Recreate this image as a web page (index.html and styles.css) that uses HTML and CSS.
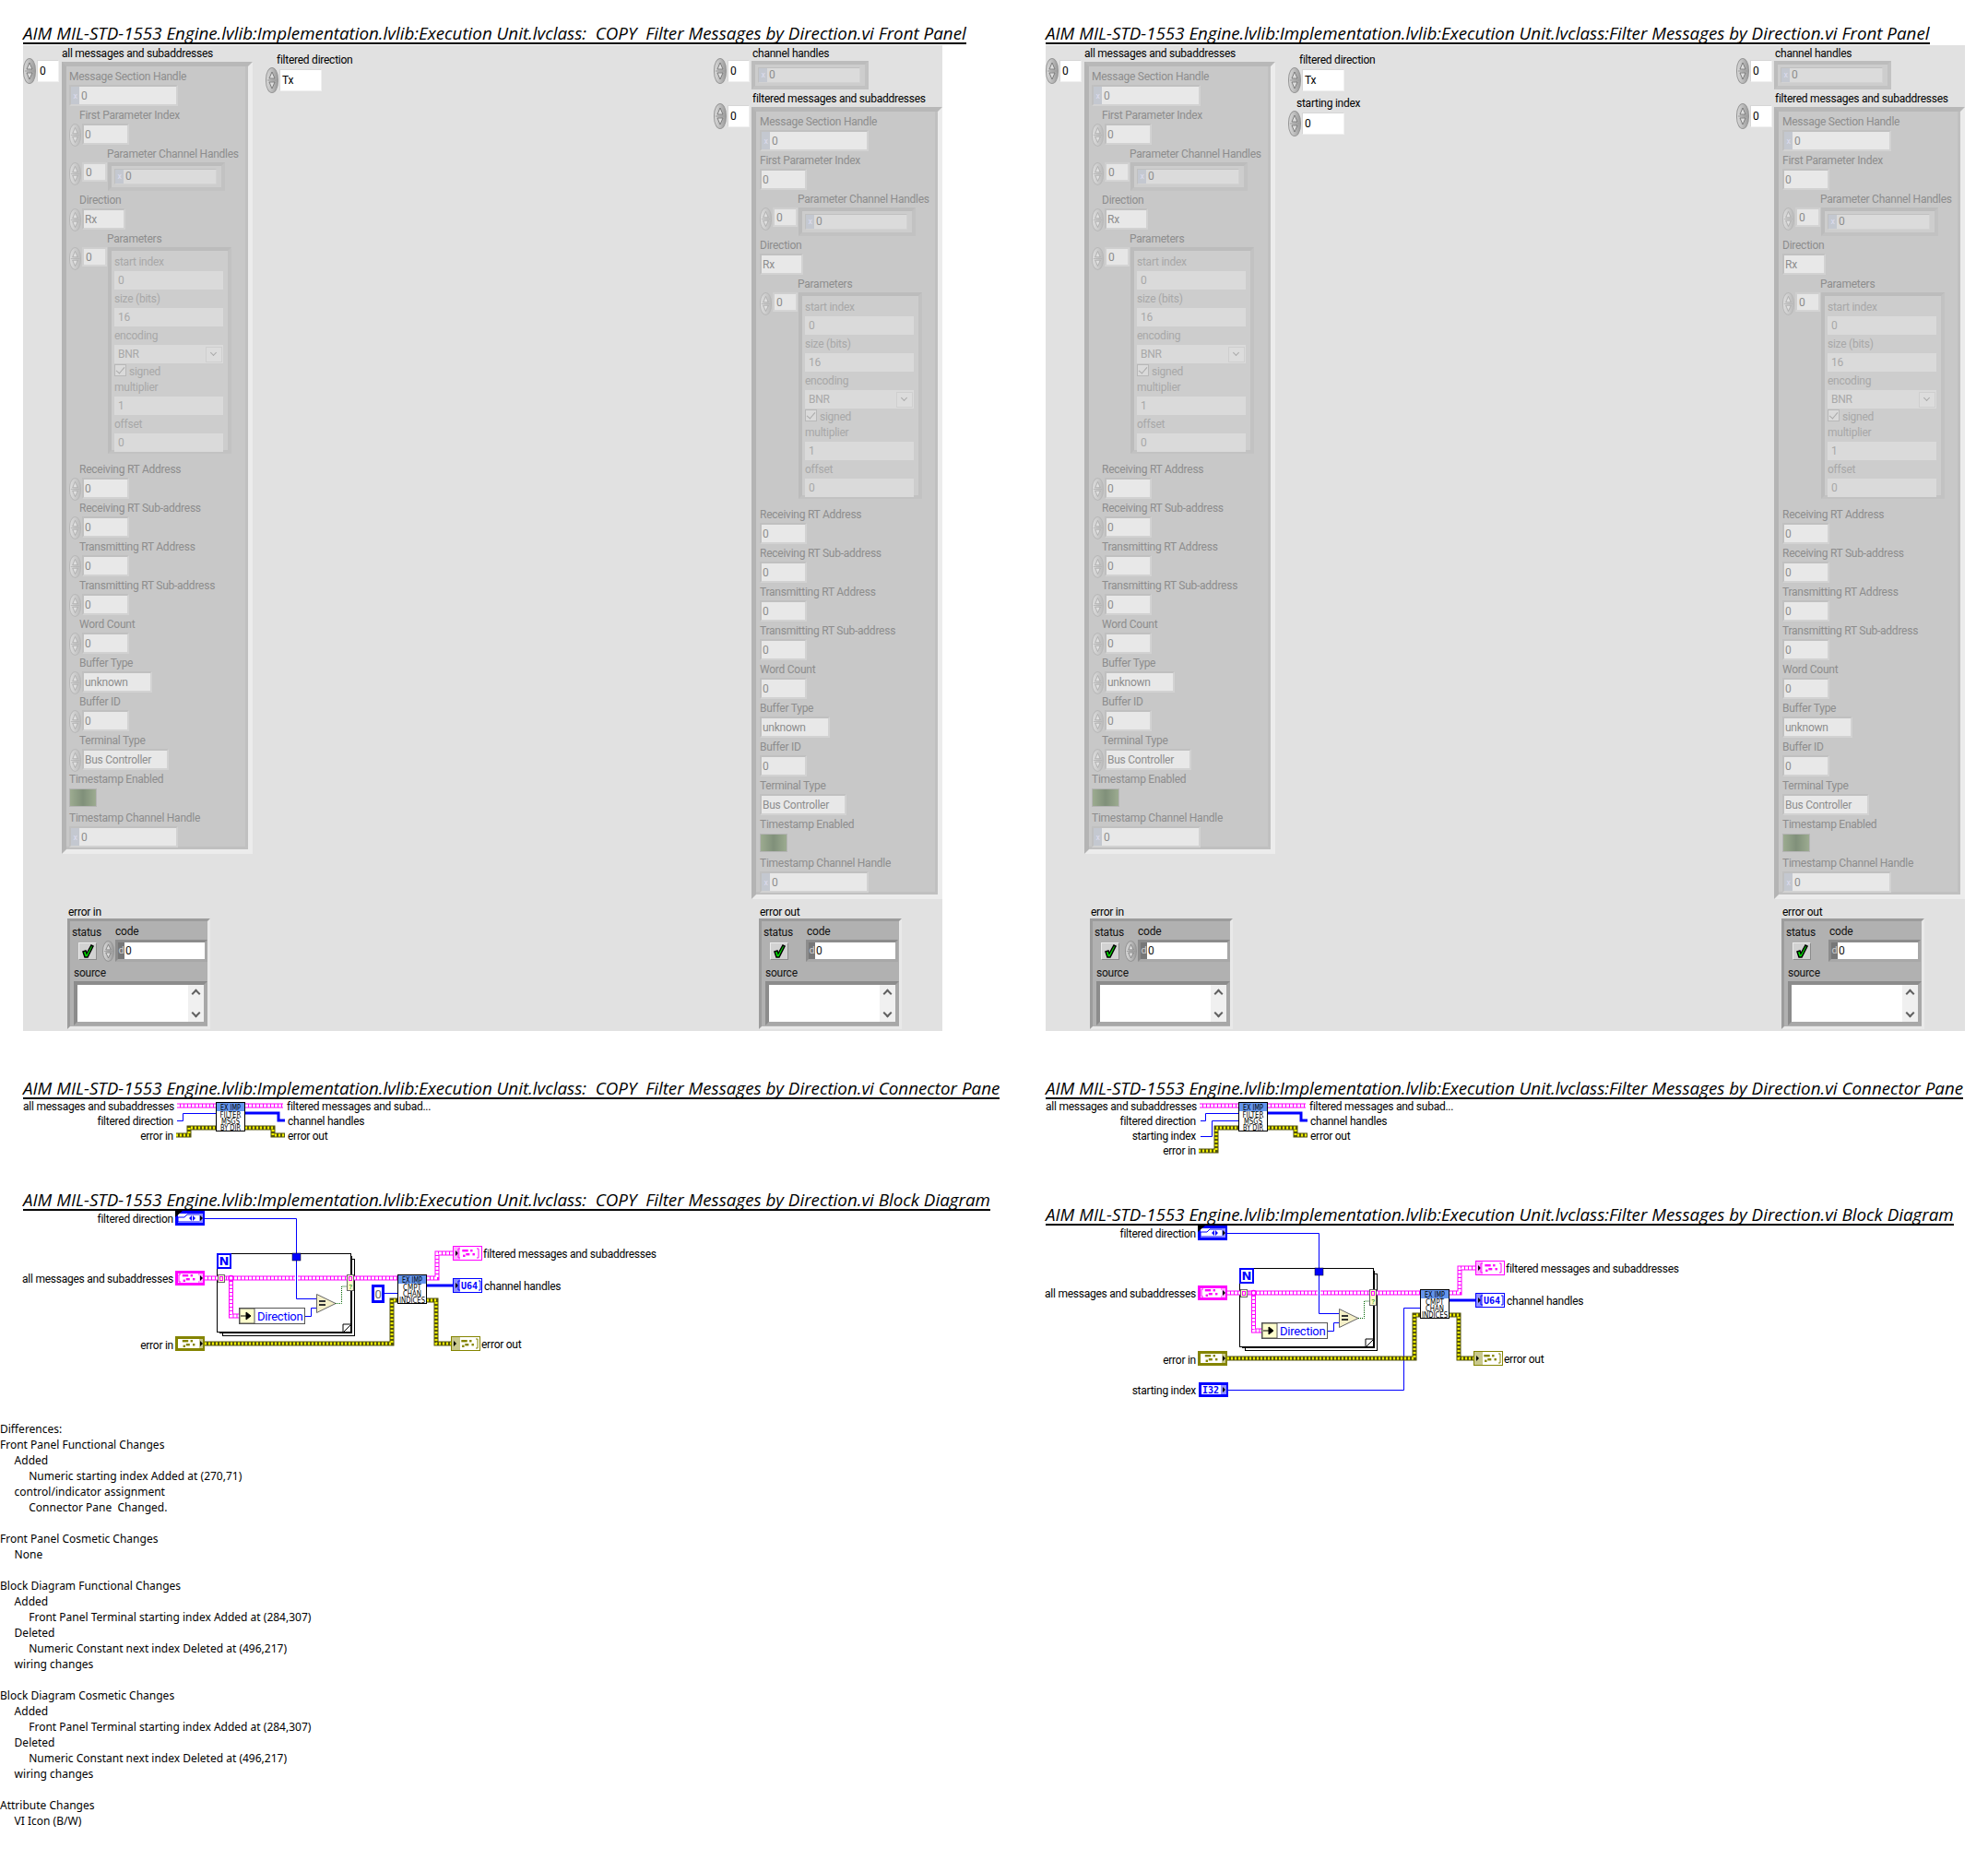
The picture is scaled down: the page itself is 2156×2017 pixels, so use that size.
FILE: index.html
```html
<!DOCTYPE html>
<html>

<head>
   <title>VI Comparison Report</title>
   <link rel="stylesheet" href="styles.css">
</head>

<body>

<svg class="defs">
   <defs>
      <symbol id="vi-filter" viewBox="0 0 32 32">
         <rect x=".5" y=".5" width="31" height="31" fill="#fff" stroke="#000" />
         <rect x="1" y="1" width="30" height="9" fill="#6495ed" />
         <text class="vi-head" x="16" y="8.5" textLength="22" lengthAdjust="spacingAndGlyphs">EX IMP</text>
         <text class="vi-line" x="16" y="17" textLength="23" lengthAdjust="spacingAndGlyphs">FILTER</text>
         <text class="vi-line" x="16" y="24" textLength="20" lengthAdjust="spacingAndGlyphs">MSGS</text>
         <text class="vi-line" x="16" y="31" textLength="22" lengthAdjust="spacingAndGlyphs">BY DIR</text>
      </symbol>
      <symbol id="vi-chan" viewBox="0 0 32 32">
         <rect x=".5" y=".5" width="31" height="31" fill="#fff" stroke="#000" />
         <rect x="1" y="1" width="30" height="9" fill="#6495ed" />
         <text class="vi-head" x="16" y="8.5" textLength="22" lengthAdjust="spacingAndGlyphs">EX IMP</text>
         <text class="vi-line" x="16" y="17" textLength="20" lengthAdjust="spacingAndGlyphs">CMPT</text>
         <text class="vi-line" x="16" y="24" textLength="20" lengthAdjust="spacingAndGlyphs">CHAN</text>
         <text class="vi-line" x="16" y="31" textLength="28" lengthAdjust="spacingAndGlyphs">INDICES</text>
      </symbol>
      <symbol id="pat-cluster" viewBox="0 0 18 10">
         <rect x="0" y="0" width="8" height="3" />
         <rect x="11" y="0" width="3" height="3" />
         <rect x="1" y="7" width="3" height="3" />
         <rect x="5" y="5" width="5" height="3" />
         <rect x="14" y="5" width="3" height="3" />
      </symbol>
      <symbol id="ctl-array" viewBox="0 0 32 16">
         <rect x="1.5" y="1.5" width="29" height="13" fill="#fff" stroke="#ff00ff" stroke-width="3" />
         <path d="M6 4H4V12H6M25 4H27V12H25" fill="none" stroke="#ff00ff" />
         <use href="#pat-cluster" x="7" y="4" width="16" height="8" fill="#ff00ff" />
         <rect x="26" y="3" width="4" height="10" fill="#ffb0ff" />
         <path d="M27 5L30 8L27 11Z" />
      </symbol>
      <symbol id="ctl-error" viewBox="0 0 32 16">
         <rect x="1.5" y="1.5" width="29" height="13" fill="#fff" stroke="#848400" stroke-width="3" />
         <use href="#pat-cluster" x="7" y="4" width="16" height="8" fill="#848400" />
         <rect x="26" y="3" width="4" height="10" fill="#c8c88c" />
         <path d="M27 5L30 8L27 11Z" />
      </symbol>
      <symbol id="ctl-enum" viewBox="0 0 32 16">
         <rect x="1.5" y="1.5" width="29" height="13" fill="#fff" stroke="#0000ff" stroke-width="3" />
         <path d="M3 7H10L13 4H27V12H3Z" fill="none" stroke="#0000ff" />
         <path d="M15 8L18 5V11ZM19 5L22 8L19 11Z" fill="#0000ff" />
         <rect x="26" y="3" width="4" height="10" fill="#9090ff" />
         <path d="M27 5L30 8L27 11Z" />
         <path d="M0 0H8L0 7Z" />
      </symbol>
      <symbol id="ctl-i32" viewBox="0 0 32 16">
         <rect x="1.5" y="1.5" width="29" height="13" fill="#fff" stroke="#0000ff" stroke-width="3" />
         <text class="term-num" x="13" y="12">I32</text>
         <rect x="24" y="3" width="6" height="10" fill="#9090ff" />
         <path d="M26 5L29 8L26 11Z" />
      </symbol>
      <symbol id="ind-array" viewBox="0 0 32 16">
         <rect x=".5" y=".5" width="31" height="15" fill="#fff" stroke="#ff00ff" />
         <rect x="1" y="1" width="7" height="14" fill="#ffb0ff" />
         <path d="M3 5L6 8L3 11Z" />
         <use href="#pat-cluster" x="10" y="4" width="15" height="8" fill="#ff00ff" />
         <path d="M8 3H6V13H8M26 3H28V13H26" fill="none" stroke="#ff00ff" />
      </symbol>
      <symbol id="ind-u64" viewBox="0 0 32 16">
         <rect x=".5" y=".5" width="31" height="15" fill="#fff" stroke="#0000ff" />
         <rect x="1" y="1" width="7" height="14" fill="#9090ff" />
         <path d="M3 5L6 8L3 11Z" />
         <path d="M8 3H6V13H8M28 3H30V13H28" fill="none" stroke="#0000ff" />
         <text class="term-num" x="18" y="12">U64</text>
      </symbol>
      <symbol id="ind-error" viewBox="0 0 32 16">
         <rect x=".5" y=".5" width="31" height="15" fill="#fff" stroke="#848400" />
         <rect x="1" y="1" width="9" height="14" fill="#c8c88c" />
         <path d="M3 5L6 8L3 11Z" />
         <use href="#pat-cluster" x="10" y="4" width="17" height="8" fill="#848400" />
         <path d="M27 3H29V13H27" fill="none" stroke="#848400" />
      </symbol>
      <g id="loop">
         <rect x="241.5" y="1365.5" width="143" height="83" fill="#fff" stroke="#000" />
         <rect x="238.5" y="1362.5" width="143" height="83" fill="#fff" stroke="#000" />
         <rect x="235.5" y="1359.5" width="145" height="85" fill="#fff" stroke="#000" />
         <path d="M372 1445L381 1436M372 1436H381M372 1436V1445" fill="none" stroke="#000" />
         <rect x="236" y="1360" width="14" height="15" fill="#fff" stroke="#0000ff" stroke-width="2" />
         <text class="loop-n" x="243" y="1372">N</text>
         <path class="thin" d="M222 1321.5H321.5V1408.5H343" />
         <rect x="317" y="1359" width="9" height="8" fill="#0000ff" stroke="#000" stroke-width=".5" />
         <path class="pink-a" d="M222 1386H320M323 1386H431" />
         <path class="pink-b" d="M222 1386H320M323 1386H431" />
         <path class="pink-a" d="M250.5 1386V1427H259" />
         <path class="pink-b" d="M250.5 1386V1427H259" />
         <circle cx="250.5" cy="1386" r="2.5" fill="#fff" stroke="#ff00ff" stroke-width="1.5" />
         <rect x="236.5" y="1382.5" width="7" height="8" fill="#ffffcc" stroke="#666" />
         <rect x="238.5" y="1384.5" width="3" height="4" fill="none" stroke="#ff00ff" />
         <rect x="376.5" y="1382.5" width="7" height="17" fill="#ffffcc" stroke="#666" />
         <rect x="378.5" y="1384.5" width="3" height="4" fill="none" stroke="#ff00ff" />
         <text class="cond" x="380" y="1398">?</text>
         <rect x="259.5" y="1418.5" width="71" height="17" fill="#fff" stroke="#555" />
         <rect x="260" y="1419" width="16" height="16" fill="#ffffcc" stroke="#555" />
         <path d="M261 1427H268M267 1423L272 1427L267 1431Z" stroke="#000" />
         <text class="unb" x="279" y="1432">Direction</text>
         <path class="thin" d="M331 1427.5H337.5V1418.5H343" />
         <path d="M343.5 1403.5L364 1413.5L343.5 1423.5Z" fill="#f5f0c8" stroke="#666" />
         <path d="M346 1411H353M346 1415H353" stroke="#333" stroke-width="2" />
         <path class="bool" d="M364 1413.5H370.5V1395H376" />
      </g>
      <g id="outs">
         <path class="pink-a" d="M463 1386H474V1359H491" />
         <path class="pink-b" d="M463 1386H474V1359H491" />
         <path class="thick" d="M463 1394H491" />
         <path class="err-a" d="M463 1410H473V1457H490" />
         <path class="err-b" d="M463 1410H473V1457H490" />
         <use href="#ind-array" x="491" y="1351" width="32" height="16" />
         <use href="#ind-u64" x="491" y="1386" width="32" height="16" />
         <use href="#ind-error" x="489" y="1449" width="32" height="16" />
         <use href="#vi-chan" x="431" y="1382" width="32" height="32" />
         <text class="tl" x="524" y="1364">filtered messages and subaddresses</text>
         <text class="tl" x="525" y="1399">channel handles</text>
         <text class="tl" x="522" y="1462">error out</text>
      </g>
      <g id="ins">
         <use href="#ctl-enum" x="190" y="1313" width="32" height="16" />
         <use href="#ctl-array" x="190" y="1378" width="32" height="16" />
         <use href="#ctl-error" x="190" y="1449" width="32" height="16" />
         <text class="tr" x="188" y="1326">filtered direction</text>
         <text class="tr" x="188" y="1391">all messages and subaddresses</text>
         <text class="tr" x="188" y="1463">error in</text>
      </g>
      <g id="pane-common">
         <path class="pink-a" d="M192 1199H234" />
         <path class="pink-b" d="M192 1199H234" />
         <path class="pink-a" d="M266 1199H307" />
         <path class="pink-b" d="M266 1199H307" />
         <path class="thick" d="M266 1207H302V1215H309" />
         <path class="err-a" d="M266 1223H296V1231H309" />
         <path class="err-b" d="M266 1223H296V1231H309" />
         <use href="#vi-filter" x="234" y="1195" width="32" height="32" />
         <text class="tr" x="189" y="1204">all messages and subaddresses</text>
         <text class="tr" x="188" y="1220">filtered direction</text>
         <text class="tl" x="311" y="1204">filtered messages and subad...</text>
         <text class="tl" x="312" y="1220">channel handles</text>
         <text class="tl" x="312" y="1236">error out</text>
      </g>
   </defs>
</svg>

<main class="sheet">

   <section class="col">
      <h2 class="vi-title">AIM MIL-STD-1553 Engine.lvlib:Implementation.lvlib:Execution Unit.lvclass:  COPY  Filter Messages by Direction.vi Front Panel</h2>
      <div class="panel" data-variant="copy"></div>

      <h2 class="vi-title gap-a">AIM MIL-STD-1553 Engine.lvlib:Implementation.lvlib:Execution Unit.lvclass:  COPY  Filter Messages by Direction.vi Connector Pane</h2>
      <svg class="pane" viewBox="0 1192 1109 93">
         <use href="#pane-common" />
         <path class="thin" d="M192 1215.5H198.5V1207.5H234" />
         <path class="err-a" d="M191 1231H205V1223H234" />
         <path class="err-b" d="M191 1231H205V1223H234" />
         <text class="tr" x="188" y="1236">error in</text>
      </svg>

      <h2 class="vi-title">AIM MIL-STD-1553 Engine.lvlib:Implementation.lvlib:Execution Unit.lvclass:  COPY  Filter Messages by Direction.vi Block Diagram</h2>
      <svg class="diagram" viewBox="0 1313 1109 228">
         <use href="#loop" />
         <path class="err-a" d="M222 1457H425V1410H431" />
         <path class="err-b" d="M222 1457H425V1410H431" />
         <path class="thin" d="M416 1402.5H431" />
         <rect x="404.5" y="1394.5" width="11" height="17" fill="#fff" stroke="#0000ff" stroke-width="3" />
         <text class="const" x="410" y="1408">0</text>
         <use href="#ins" />
         <use href="#outs" />
      </svg>

      <pre class="diff">Differences:
Front Panel Functional Changes
     Added
          Numeric starting index Added at (270,71)
     control/indicator assignment
          Connector Pane  Changed.

Front Panel Cosmetic Changes
     None

Block Diagram Functional Changes
     Added
          Front Panel Terminal starting index Added at (284,307)
     Deleted
          Numeric Constant next index Deleted at (496,217)
     wiring changes

Block Diagram Cosmetic Changes
     Added
          Front Panel Terminal starting index Added at (284,307)
     Deleted
          Numeric Constant next index Deleted at (496,217)
     wiring changes

Attribute Changes
     VI Icon (B/W)</pre>
   </section>

   <section class="col">
      <h2 class="vi-title">AIM MIL-STD-1553 Engine.lvlib:Implementation.lvlib:Execution Unit.lvclass:Filter Messages by Direction.vi Front Panel</h2>
      <div class="panel" data-variant="orig"></div>

      <h2 class="vi-title gap-a">AIM MIL-STD-1553 Engine.lvlib:Implementation.lvlib:Execution Unit.lvclass:Filter Messages by Direction.vi Connector Pane</h2>
      <svg class="pane pane-tall" viewBox="0 1192 1109 109">
         <use href="#pane-common" />
         <path class="thin" d="M193 1215.5H198.5V1207.5H234" />
         <path class="thin" d="M193 1232.5H205.5V1215.5H234" />
         <path class="err-a" d="M191 1248H210V1223H234" />
         <path class="err-b" d="M191 1248H210V1223H234" />
         <text class="tr" x="188" y="1236">starting index</text>
         <text class="tr" x="188" y="1252">error in</text>
      </svg>

      <h2 class="vi-title">AIM MIL-STD-1553 Engine.lvlib:Implementation.lvlib:Execution Unit.lvclass:Filter Messages by Direction.vi Block Diagram</h2>
      <svg class="diagram" viewBox="0 1313 1109 228">
         <use href="#loop" />
         <path class="thin" d="M222 1491.5H413.5V1402.5H431" />
         <path class="err-a" d="M222 1457H425V1410H431" />
         <path class="err-b" d="M222 1457H425V1410H431" />
         <use href="#ins" />
         <use href="#outs" />
         <use href="#ctl-i32" x="191" y="1483" width="32" height="16" />
         <text class="tr" x="188" y="1496">starting index</text>
      </svg>
   </section>

</main>

<script src="panel.js"></script>

</body>

</html>
```

FILE: styles.css
```css
html,
body {
   margin: 0;
   background: #fff;
}

body {
   font-family: Roboto, sans-serif;
   font-size: 12px;
   letter-spacing: -.25px;
   color: #000;
}

.defs {
   position: absolute;
   width: 0;
   height: 0;
}

.sheet {
   display: grid;
   grid-template-columns: 1109px 1fr;
   height: 2017px;
   overflow: hidden;
}

.col {
   min-width: 0;
}

.vi-title {
   display: block;
   width: fit-content;
   margin: 0 0 0 25px;
   padding-top: 20px;
   height: 26px;
   border-bottom: 2px solid #000;
   font: italic 400 18.8px/33px "Open Sans", sans-serif;
   letter-spacing: 0;
   white-space: pre;
   color: #000;
}

.vi-title.gap-a {
   margin-top: 46px;
   padding-top: 0;
}

.vi-title:not(:first-child):not(.gap-a) {
   padding-top: 0;
}

.col svg.pane {
   display: block;
   width: 1109px;
   height: 93px;
}

.col svg.pane-tall {
   height: 109px;
}

.col svg.diagram {
   display: block;
   width: 1109px;
   height: 228px;
}

.diff {
   margin: 0;
   font: 12px/17px "Noto Sans", sans-serif;
   letter-spacing: 0;
}

/* front panel */

.panel {
   position: relative;
   width: 997px;
   height: 1069px;
   margin: 1px 0 0 25px;
   background: #e1e1e1;
}

.panel > * {
   position: absolute;
}

.lbl {
   height: 18px;
   line-height: 18px;
   white-space: nowrap;
}

.spin {
   flex: none;
   box-sizing: border-box;
   width: 13px;
   height: 25px;
   margin-right: 1px;
   border: 1px solid #969696;
   border-radius: 7px / 12px;
   background:
      url("data:image/svg+xml,%3Csvg xmlns='http://www.w3.org/2000/svg' viewBox='0 0 14 26' preserveAspectRatio='none'%3E%3Cpath d='M7 4L3.5 11H10.5Z' fill='%23ddd' stroke='%23666' stroke-width='.8'/%3E%3Cpath d='M7 22L3.5 15H10.5Z' fill='%23ddd' stroke='%23666' stroke-width='.8'/%3E%3Cpath d='M1 13H13' stroke='%23999'/%3E%3C/svg%3E") center / 100% 100% no-repeat,
      linear-gradient(90deg, #d8d8d8, #bcbcbc 50%, #9c9c9c);
}

.dim .spin {
   border-color: #b8b8b8;
   background:
      url("data:image/svg+xml,%3Csvg xmlns='http://www.w3.org/2000/svg' viewBox='0 0 14 26' preserveAspectRatio='none'%3E%3Cpath d='M7 4L3.5 11H10.5Z' fill='%23e0e0e0' stroke='%23a0a0a0' stroke-width='.8'/%3E%3Cpath d='M7 22L3.5 15H10.5Z' fill='%23e0e0e0' stroke='%23a0a0a0' stroke-width='.8'/%3E%3Cpath d='M1 13H13' stroke='%23b4b4b4'/%3E%3C/svg%3E") center / 100% 100% no-repeat,
      linear-gradient(90deg, #dcdcdc, #cccccc 50%, #bcbcbc);
}

.idx-col {
   display: flex;
   align-items: center;
}

.idx-col .spin {
   width: 14px;
   height: 28px;
   border-radius: 7px / 13px;
}

.idx {
   box-sizing: border-box;
   flex: none;
   width: 27px;
   height: 21px;
   padding-left: 2px;
   line-height: 18px;
   background: #fff;
   border: 2px solid;
   border-color: #e8e8e8 #ececec #ececec #e8e8e8;
}

.dim .idx {
   background: #e6e6e6;
   color: #8a8a8a;
   border-color: #cfcfcf #d4d4d4 #d4d4d4 #cfcfcf;
}

.str {
   box-sizing: border-box;
   display: flex;
   height: 24px;
   padding: 1px 0 0 2px;
   line-height: 21px;
   background: #fff;
   border: 1px solid;
   border-color: #d6d6d6 #f0f0f0 #f0f0f0 #d6d6d6;
}

/* disabled cluster */

.cluster {
   box-sizing: border-box;
   width: 207px;
   height: 859px;
   padding: 2px 3px 0 3px;
   background: #c8c8c8;
   color: #8d8d8d;
   border: 5px solid;
   border-color: #b8b8b8 #ececec #ececec #b4b4b4;
   box-shadow: inset -3px -3px 0 #c0c0c0;
}

.cluster-r {
   padding-left: 4px;
}

.row {
   height: 42px;
}

.row.tall-a {
   height: 50px;
}

.row.tall-b {
   height: 250px;
}

.row.indent > .lbl {
   margin-left: 11px;
}

.row.indent-a > .lbl {
   margin-left: 41px;
}

.ctl {
   display: flex;
   align-items: flex-start;
}

.fld {
   box-sizing: border-box;
   display: flex;
   flex: none;
   height: 23px;
   padding-left: 1px;
   line-height: 21px;
   background: #e8e8e8;
   border: 2px solid;
   border-color: #c0c0c0 #d2d2d2 #d2d2d2 #c0c0c0;
   color: #8d8d8d;
}

.radix {
   width: 9px;
   margin: 0 2px 0 -1px;
   font-size: 9px;
   text-align: center;
   background: #c4c8d0;
   color: #dde;
}

.w-ref {
   width: 118px;
}

.w-num {
   width: 51px;
}

.w-enum {
   width: 47px;
}

.w-buf {
   width: 76px;
}

.w-term {
   width: 94px;
}

.arr-frame {
   box-sizing: border-box;
   flex: none;
   margin-left: 1px;
   padding: 3px 5px 3px 3px;
   background: #cdcdcd;
   border: 4px solid;
   border-color: #bcbcbc #c2c2c2 #c2c2c2 #bcbcbc;
}

.arr-chan {
   width: 127px;
   height: 31px;
}

.arr-chan .fld {
   width: 111px;
   height: 17px;
   line-height: 14px;
   border-width: 1px;
   background: #dbdbdb;
}

.arr-param {
   width: 134px;
   height: 224px;
   color: #a8a8a8;
}

.p-row {
   height: 40px;
}

.p-row .lbl {
   height: 19px;
   line-height: 18px;
}

.p-fld {
   box-sizing: border-box;
   height: 20px;
   padding-left: 4px;
   line-height: 20px;
   background: #dadada;
   color: #a8a8a8;
}

.p-ring {
   display: flex;
   justify-content: space-between;
}

.p-arrow {
   width: 16px;
   height: 15px;
   margin: 2px 1px;
   border: 1px solid #cfcfcf;
   background: #dcdcdc;
   position: relative;
}

.p-arrow::after {
   content: "";
   position: absolute;
   left: 5px;
   top: 3px;
   width: 4px;
   height: 4px;
   border-right: 1px solid #aaa;
   border-bottom: 1px solid #aaa;
   transform: rotate(45deg);
}

.p-check {
   display: flex;
   height: 16px;
   line-height: 16px;
   gap: 3px;
}

.p-box {
   box-sizing: border-box;
   width: 13px;
   height: 13px;
   border: 1px solid #b8b8b8;
   background: #dadada;
   position: relative;
}

.p-box::after {
   content: "";
   position: absolute;
   left: 3px;
   top: 0;
   width: 4px;
   height: 8px;
   border-right: 1px solid #aaa;
   border-bottom: 1px solid #aaa;
   transform: rotate(40deg);
}

.led {
   width: 30px;
   height: 20px;
   margin-top: 1px;
   background: linear-gradient(90deg, #9cab90, #80907a 50%, #9cab90);
   border: 1px solid #b4b4b4;
   box-sizing: border-box;
}

/* error cluster */

.err {
   box-sizing: border-box;
   width: 155px;
   height: 120px;
   background: #b1b1b1;
   border: 3px solid;
   border-color: #9c9c9c #e9e9e9 #e9e9e9 #9c9c9c;
   color: #111;
}

.err-top {
   display: flex;
   padding: 3px 0 0 2px;
}

.err-status {
   width: 47px;
   margin-top: 1px;
}

.err-status .lbl {
   height: 16px;
   line-height: 16px;
}

.err-led {
   box-sizing: border-box;
   width: 20px;
   height: 19px;
   margin: 3px 0 0 7px;
   background: #d2d2d2;
   border: 1px solid;
   border-color: #ececec #8c8c8c #8c8c8c #ececec;
}

.err-led svg {
   display: block;
   width: 18px;
   height: 17px;
}

.err-code .lbl {
   height: 17px;
   line-height: 17px;
}

.err-code-row {
   display: flex;
   align-items: center;
   margin-left: -14px;
}

.err-code-row .spin {
   height: 23px;
}

.err-code-row.no-spin {
   margin-left: -1px;
}

.err-code-row .code {
   box-sizing: border-box;
   display: flex;
   width: 100px;
   height: 24px;
   border: 3px solid;
   border-color: #8c8c8c #a8a8a8 #a8a8a8 #8c8c8c;
   background: #fff;
   line-height: 18px;
}

.code .radix {
   background: #777;
   color: #ccc;
   width: 7px;
   margin: 0 1px 0 0;
   font-size: 11px;
   line-height: 17px;
}

.err-src {
   margin: 3px 0 0 4px;
}

.err-src .lbl {
   margin-bottom: 0;
}

.err-text {
   box-sizing: border-box;
   display: flex;
   justify-content: flex-end;
   width: 145px;
   height: 48px;
   margin-left: 0;
   background: #fff;
   border: 4px solid;
   border-color: #8c8c8c #a8a8a8 #a8a8a8 #8c8c8c;
}

.scroll {
   display: flex;
   flex-direction: column;
   justify-content: space-between;
   align-items: center;
   width: 17px;
   background: #f0f0f0;
   padding: 3px 0;
   box-sizing: border-box;
}

.chev {
   width: 5px;
   height: 5px;
   border-left: 2px solid #606060;
   border-top: 2px solid #606060;
   transform: rotate(45deg);
   margin-top: 3px;
}

.chev.down {
   transform: rotate(225deg);
   margin-top: 0;
   margin-bottom: 3px;
}

/* diagram text and wires */

svg text {
   font-family: Roboto, sans-serif;
   font-size: 12px;
   letter-spacing: -.25px;
   fill: #000;
}

.tr {
   text-anchor: end;
}

.tl {
   text-anchor: start;
}

svg .vi-head,
svg .vi-line {
   font-family: "DejaVu Sans", sans-serif;
   font-size: 8.5px;
   letter-spacing: 0;
   text-anchor: middle;
}

svg .term-num {
   font-family: "DejaVu Sans Mono", monospace;
   font-size: 10px;
   font-weight: 700;
   letter-spacing: 0;
   text-anchor: middle;
   fill: #0000ff;
}

svg .loop-n {
   font-family: "DejaVu Sans", sans-serif;
   font-size: 13px;
   font-weight: 700;
   letter-spacing: 0;
   text-anchor: middle;
   fill: #0000ff;
}

svg .cond {
   font-size: 8px;
   text-anchor: middle;
   fill: #008000;
}

svg .unb {
   font-size: 13px;
   fill: #0000ff;
}

svg .const {
   font-size: 13px;
   text-anchor: middle;
   fill: #666;
}

.thin,
.thick,
.bool,
.pink-a,
.pink-b,
.err-a,
.err-b {
   fill: none;
}

.thin {
   stroke: #0000ff;
   stroke-width: 1;
}

.thick {
   stroke: #0000ff;
   stroke-width: 3;
}

.bool {
   stroke: #006400;
   stroke-width: 1;
   stroke-dasharray: 1 1;
}

.pink-a {
   stroke: #ff00ff;
   stroke-width: 5;
}

.pink-b {
   stroke: #fff;
   stroke-width: 3;
   stroke-dasharray: 3 1;
}

.err-a {
   stroke: #55550a;
   stroke-width: 5;
}

.err-b {
   stroke: #eeee00;
   stroke-width: 3;
   stroke-dasharray: 2 2;
}
```

FILE: panel.js
```js
const ROWS = [
   ['Message Section Handle', 'ref'],
   ['First Parameter Index', 'num', '0'],
   ['Parameter Channel Handles', 'chan'],
   ['Direction', 'enum', 'Rx'],
   ['Parameters', 'params'],
   ['Receiving RT Address', 'num', '0'],
   ['Receiving RT Sub-address', 'num', '0'],
   ['Transmitting RT Address', 'num', '0'],
   ['Transmitting RT Sub-address', 'num', '0'],
   ['Word Count', 'num', '0'],
   ['Buffer Type', 'buf', 'unknown'],
   ['Buffer ID', 'num', '0'],
   ['Terminal Type', 'term', 'Bus Controller'],
   ['Timestamp Enabled', 'led'],
   ['Timestamp Channel Handle', 'ref'],
];

const SPIN = '<div class="spin"></div>';
const CHECK = '<svg viewBox="0 0 18 17"><path d="M4 9L7 8L8 11L13 2L15 3L9 15H6Z" fill="#00e000" stroke="#000" stroke-width="1.5"/></svg>';

function paramRows() {
   const p = (label, val) => `<div class="p-row"><div class="lbl">${label}</div><div class="p-fld">${val}</div></div>`;
   return p('start index', '0') + p('size (bits)', '16') +
      `<div class="p-row"><div class="lbl">encoding</div><div class="p-fld p-ring">BNR<div class="p-arrow"></div></div></div>` +
      `<div class="p-check"><div class="p-box"></div>signed</div>` +
      p('multiplier', '1') + p('offset', '0');
}

function row(label, kind, val, spin) {
   const sp = spin ? SPIN : '';
   switch (kind) {
      case 'ref':
         return `<div class="row"><div class="lbl">${label}</div><div class="ctl"><div class="fld w-ref"><span class="radix">x</span>0</div></div></div>`;
      case 'chan':
         return `<div class="row tall-a indent-a"><div class="lbl">${label}</div><div class="ctl">${SPIN}<div class="idx">0</div>` +
            `<div class="arr-frame arr-chan"><div class="fld"><span class="radix">x</span>0</div></div></div></div>`;
      case 'params':
         return `<div class="row tall-b indent-a"><div class="lbl">${label}</div><div class="ctl">${SPIN}<div class="idx">0</div>` +
            `<div class="arr-frame arr-param">${paramRows()}</div></div></div>`;
      case 'led':
         return `<div class="row"><div class="lbl">${label}</div><div class="led"></div></div>`;
      default:
         return `<div class="row${spin ? ' indent' : ''}"><div class="lbl">${label}</div><div class="ctl">${sp}<div class="fld w-${kind}">${val}</div></div></div>`;
   }
}

function cluster(x, y, spin) {
   const rows = ROWS.map(r => row(r[0], r[1], r[2], spin)).join('');
   return `<div class="cluster dim${spin ? '' : ' cluster-r'}" style="left:${x}px;top:${y}px">${rows}</div>`;
}

function arrayIndex(x, y) {
   return `<div class="idx-col" style="left:${x}px;top:${y}px">${SPIN}<div class="str" style="width:24px">0</div></div>`;
}

function label(text, x, y) {
   return `<div class="lbl" style="left:${x}px;top:${y}px">${text}</div>`;
}

function stringCtl(text, x, y, w) {
   return `<div class="idx-col" style="left:${x}px;top:${y}px">${SPIN}<div class="str" style="width:${w}px">${text}</div></div>`;
}

function errorCluster(name, x, spin) {
   return label(name, x + 1, 931) +
      `<div class="err" style="left:${x}px;top:947px">
         <div class="err-top">
            <div class="err-status"><div class="lbl">status</div><div class="err-led">${CHECK}</div></div>
            <div class="err-code"><div class="lbl">code</div>
               <div class="err-code-row${spin ? '' : ' no-spin'}">${spin ? SPIN : ''}<div class="code"><span class="radix">d</span>0</div></div>
            </div>
         </div>
         <div class="err-src"><div class="lbl">source</div>
            <div class="err-text"><div class="scroll"><div class="chev"></div><div class="chev down"></div></div></div>
         </div>
      </div>`;
}

for (const panel of document.querySelectorAll('.panel')) {
   let html = label('all messages and subaddresses', 42, 0);
   html += arrayIndex(0, 14);
   html += cluster(42, 18, true);
   html += label('filtered direction', 275, 7);
   html += stringCtl('Tx', 263, 24, 46);
   html += label('channel handles', 791, 0);
   html += arrayIndex(749, 14);
   html += `<div class="arr-frame arr-chan dim" style="left:790px;top:17px;margin:0"><div class="fld"><span class="radix">x</span>0</div></div>`;
   html += label('filtered messages and subaddresses', 791, 49);
   html += arrayIndex(749, 63);
   html += cluster(790, 67, false);
   html += errorCluster('error in', 48, true);
   html += errorCluster('error out', 798, false);
   if (panel.dataset.variant == 'orig') {
      html += label('starting index', 272, 54);
      html += stringCtl('0', 263, 71, 46);
   }
   panel.innerHTML = html;
}
```
